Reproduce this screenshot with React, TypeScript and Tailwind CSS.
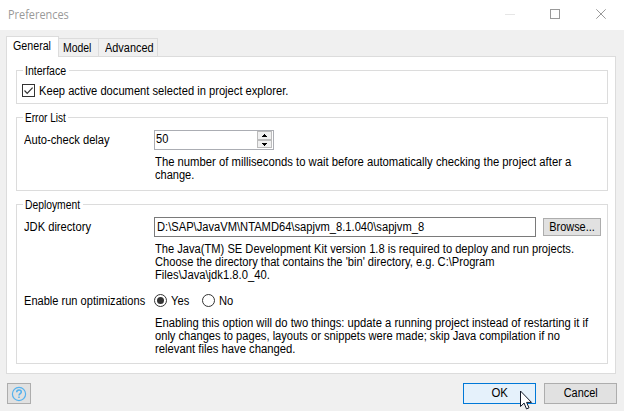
import type { ReactNode } from "react";

// Condensed run of text: the dialog's face is narrower than the installed sans.
function T({ children, s = "scale-x-[0.93]", className = "" }: { children: ReactNode; s?: string; className?: string }) {
  return <span className={`inline-block origin-left ${s} ${className}`}>{children}</span>;
}

function Group({
  title,
  titleWidth,
  titleScale,
  className,
  children,
}: {
  title: string;
  titleWidth: string;
  titleScale: string;
  className: string;
  children: ReactNode;
}) {
  return (
    <section className={`box-border border border-[#dcdcdc] ${className}`}>
      <h2 className={`-mt-[7px] ml-[6px] h-[14px] bg-white pl-[2px] leading-[14px] ${titleWidth}`}>
        <T s={titleScale}>{title}</T>
      </h2>
      {children}
    </section>
  );
}

function Radio({ checked }: { checked?: boolean }) {
  return (
    <svg width="13" height="13" viewBox="0 0 13 13" className="shrink-0">
      <circle cx="6.5" cy="6.5" r="6" fill="#fff" stroke="#333" />
      {checked && <circle cx="6.5" cy="6.5" r="3.5" fill="#333" />}
    </svg>
  );
}

function Lines({ lines, className }: { lines: [string, string][]; className: string }) {
  return (
    <div className={`ml-[138px] ${className}`}>
      {lines.map(([text, scale]) => (
        <p key={text} className="h-[13px] leading-[13px] nth-3:h-[12px] nth-3:leading-[12px]">
          <T s={scale}>{text}</T>
        </p>
      ))}
    </div>
  );
}

export default function App() {
  return (
    <div className="relative flex h-[411px] w-[624px] flex-col overflow-hidden bg-[#f0f0f0] font-['Liberation_Sans',Arial,sans-serif] text-[12px] leading-[14px] whitespace-nowrap text-black">
      <header className="flex h-[30px] shrink-0 items-center justify-between bg-white pl-[8px]">
        <h1 className="font-['Open_Sans',sans-serif] text-[12px] text-[#999]">
          <T s="scale-x-[0.91]">Preferences</T>
        </h1>
        <svg width="124" height="30" viewBox="0 0 124 30" fill="none" shapeRendering="crispEdges">
          <path d="M5 14.5h10" stroke="#e6e6e6" />
          <rect x="50.5" y="9.5" width="9" height="9" stroke="#999" />
          <path d="M96.3 9.3l9.4 9.4M105.7 9.3l-9.4 9.4" stroke="#999" shapeRendering="auto" />
        </svg>
      </header>

      <nav className="z-10 mt-[6px] ml-[6px] flex h-[21px] shrink-0 items-start">
        <div className="h-[21px] w-[53px] border border-b-0 border-[#dcdcdc] bg-white pt-[2px] pl-[6px]">
          <T s="scale-x-[0.89]">General</T>
        </div>
        <div className="mt-[2px] h-[19px] w-[40px] border-y border-r border-[#dcdcdc] pt-[2px] pl-[4px]">
          <T s="scale-x-[0.87]">Model</T>
        </div>
        <div className="mt-[2px] h-[19px] w-[59px] border-y border-r border-[#dcdcdc] pt-[2px] pl-[6px]">
          <T s="scale-x-[0.91]">Advanced</T>
        </div>
      </nav>

      <main className="-mt-px ml-[6px] h-[318px] w-[610px] shrink-0 border border-[#dcdcdc] bg-white pt-[13px] pl-[9px]">
        <Group title="Interface" titleWidth="w-[46px]" titleScale="scale-x-[0.88]" className="h-[34px] w-[592px]">
          <div className="mt-[6px] ml-[5px] flex h-[13px] items-start gap-[4px]">
            <svg width="13" height="13" viewBox="0 0 13 13" fill="none">
              <rect x="0.5" y="0.5" width="12" height="12" stroke="#333" />
              <path d="M2.5 6.5l2.7 2.8L10.6 3.6" stroke="#333" strokeWidth="1.2" />
            </svg>
            <T>Keep active document selected in project explorer.</T>
          </div>
        </Group>

        <Group title="Error List" titleWidth="w-[45px]" titleScale="scale-x-[0.84]" className="mt-[13px] h-[74px] w-[592px]">
          <div className="mt-[5px] ml-[7px] flex h-[20px] items-center">
            <span className="w-[130px]">
              <T>Auto-check delay</T>
            </span>
            <div className="flex h-[20px] w-[120px] justify-between border border-[#abadb3] pl-[1px]">
              <T s="scale-x-[0.92]" className="pt-[1px]">50</T>
              <svg width="16" height="18" viewBox="0 0 16 18" shapeRendering="crispEdges">
                <rect x="0.5" y="0.5" width="14" height="8" fill="#f0f0f0" stroke="#bcbcbc" />
                <rect x="0.5" y="9.5" width="14" height="7" fill="#f0f0f0" stroke="#bcbcbc" />
                <path d="M7 3h1v1h1v1h1v1h-5v-1h1v-1h1z" fill="#000" />
                <path d="M5 12h5v1h-1v1h-1v1h-1v-1h-1v-1h-1z" fill="#000" />
              </svg>
            </div>
          </div>
          <Lines
            className="mt-[6px]"
            lines={[
              ["The number of milliseconds to wait before automatically checking the project after a", "scale-x-[0.94]"],
              ["change.", "scale-x-[0.92]"],
            ]}
          />
        </Group>

        <Group title="Deployment" titleWidth="w-[60px]" titleScale="scale-x-[0.86]" className="mt-[13px] h-[160px] w-[592px]">
          <div className="mt-[5px] ml-[7px] flex h-[20px] items-center">
            <span className="w-[130px]">
              <T>JDK directory</T>
            </span>
            <div className="h-[20px] w-[382px] border border-[#7a7a7a] pt-[2px] pl-[2px]">
              <T>D:\SAP\JavaVM\NTAMD64\sapjvm_8.1.040\sapjvm_8</T>
            </div>
            <button className="ml-[7px] h-[18px] w-[58px] border border-[#adadad] bg-[#e1e1e1] leading-[16px]">
              <span className="inline-block scale-x-[0.91]">Browse...</span>
            </button>
          </div>
          <Lines
            className="mt-[6px]"
            lines={[
              ["The Java(TM) SE Development Kit version 1.8 is required to deploy and run projects.", "scale-x-[0.928]"],
              ["Choose the directory that contains the 'bin' directory, e.g. C:\\Program", "scale-x-[0.928]"],
              ["Files\\Java\\jdk1.8.0_40.", "scale-x-[0.935]"],
            ]}
          />
          <div className="mt-[13px] ml-[7px] flex h-[14px] items-start">
            <span className="w-[130px]">
              <T s="scale-x-[0.922]">Enable run optimizations</T>
            </span>
            <Radio checked />
            <span className="ml-[4px] w-[31px]">
              <T>Yes</T>
            </span>
            <Radio />
            <T className="ml-[4px]">No</T>
          </div>
          <Lines
            className="mt-[9px]"
            lines={[
              ["Enabling this option will do two things: update a running project instead of restarting it if", "scale-x-[0.937]"],
              ["only changes to pages, layouts or snippets were made; skip Java compilation if no", "scale-x-[0.928]"],
              ["relevant files have changed.", "scale-x-[0.94]"],
            ]}
          />
        </Group>
      </main>

      <footer className="mt-[9px] flex h-[21px] shrink-0 items-center px-[7px]">
        <button className="flex h-[21px] w-[24px] items-center justify-center border border-[#adadad] bg-[#e1e1e1]">
          <svg width="16" height="16" viewBox="0 0 16 16" fill="none" stroke="#55b2ee" strokeWidth="1.2">
            <circle cx="8" cy="8" r="6.6" />
            <path d="M5.7 6.2c0-1.5 1-2.3 2.3-2.3s2.3.8 2.3 2c0 1.7-2.3 1.9-2.3 3.6M8 10.6v1.5" strokeWidth="1.5" />
          </svg>
        </button>
        <button className="ml-auto h-[21px] w-[73px] border border-[#0078d7] bg-[#e5f1fb] leading-[19px]">
          <span className="inline-block scale-x-[0.95]">OK</span>
        </button>
        <button className="ml-[8px] h-[21px] w-[73px] border border-[#adadad] bg-[#e1e1e1] leading-[19px]">
          <span className="inline-block scale-x-[0.91]">Cancel</span>
        </button>
      </footer>

      <svg className="absolute top-[390px] left-[520px]" width="13" height="21" viewBox="0 0 13 21">
        <path d="M.5 1v15.5l3.6-3.4 2.4 5.8 2.5-1.1-2.4-5.4h4.9z" fill="#fff" stroke="#111827" />
      </svg>
    </div>
  );
}
